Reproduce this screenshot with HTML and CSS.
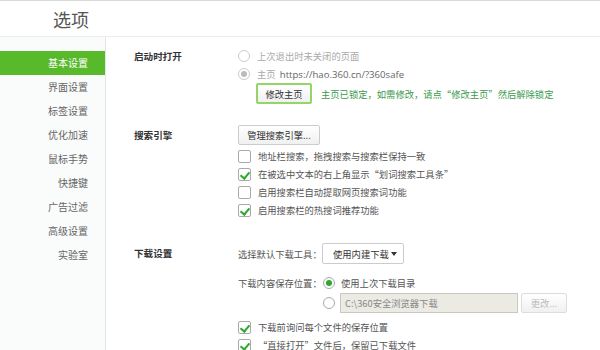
FILE: index.html
```html
<!DOCTYPE html>
<html lang="zh-CN">
<head>
<meta charset="utf-8">
<title>选项</title>
<link rel="stylesheet" href="styles.css">
</head>
<body>
<div class="window">
  <header class="header"><h1 class="title">选项</h1></header>
  <div class="body">
    <nav class="sidebar">
      <div class="nav-item active">基本设置</div>
      <div class="nav-item">界面设置</div>
      <div class="nav-item">标签设置</div>
      <div class="nav-item">优化加速</div>
      <div class="nav-item">鼠标手势</div>
      <div class="nav-item">快捷键</div>
      <div class="nav-item">广告过滤</div>
      <div class="nav-item">高级设置</div>
      <div class="nav-item">实验室</div>
    </nav>
    <main class="main">
      <section class="section s1">
        <div class="label">启动时打开</div>
        <div class="controls">
          <div class="row disabled"><span class="radio dis"></span><span>上次退出时未关闭的页面</span></div>
          <div class="row disabled"><span class="radio dis checked-gray"></span><span>主页&nbsp;&nbsp;<span class="latin">https://hao.360.cn/?360safe</span></span></div>
          <div class="row btnrow">
            <span class="btn btn-green">修改主页</span>
            <span class="green-text">主页已锁定，如需修改，请点“修改主页”然后解除锁定</span>
          </div>
        </div>
      </section>
      <section class="section s2">
        <div class="label">搜索引擎</div>
        <div class="controls">
          <div class="row btnrow2"><span class="btn btn-plain">管理搜索引擎...</span></div>
          <div class="checks">
            <div class="row"><span class="check"></span><span>地址栏搜索，拖拽搜索与搜索栏保持一致</span></div>
            <div class="row"><span class="check on"></span><span>在被选中文本的右上角显示“划词搜索工具条”</span></div>
            <div class="row"><span class="check"></span><span>启用搜索栏自动提取网页搜索词功能</span></div>
            <div class="row"><span class="check on"></span><span>启用搜索栏的热搜词推荐功能</span></div>
          </div>
        </div>
      </section>
      <section class="section s3">
        <div class="label">下载设置</div>
        <div class="controls">
          <div class="row selrow"><span class="flabel">选择默认下载工具：</span><span class="select">使用内建下载<span class="caret"></span></span></div>
          <div class="row pathrow"><span class="flabel">下载内容保存位置：</span><span class="radio on"></span><span>使用上次下载目录</span></div>
          <div class="row inputrow"><span class="radio"></span><span class="input">C:\360安全浏览器下载</span><span class="btn btn-dis">更改...</span></div>
          <div class="checks checks3">
            <div class="row"><span class="check on"></span><span>下载前询问每个文件的保存位置</span></div>
            <div class="row"><span class="check on"></span><span>“直接打开”文件后，保留已下载文件</span></div>
          </div>
        </div>
      </section>
    </main>
  </div>
</div>
</body>
</html>
```

FILE: styles.css
```css
* { box-sizing: border-box; }
html, body { margin: 0; padding: 0; }
body {
  width: 600px;
  height: 350px;
  overflow: hidden;
  background: #fff;
  font-family: "Noto Sans CJK SC", "Microsoft YaHei", "Noto Sans", sans-serif;
  font-size: 10px;
  color: #555;
}
.window { border-top: 1px solid #d9d9d9; height: 350px; }
.header {
  height: 36px;
  border-bottom: 1px solid #ececec;
  padding-left: 53px;
  display: flex;
  align-items: center;
}
.title {
  margin: 0;
  font-size: 18px;
  font-weight: normal;
  color: #555;
  line-height: 1;
}
.body { display: flex; height: 313px; }
.sidebar {
  width: 106px;
  flex: none;
  background: #fafbfb;
  border-right: 1px solid #e6e6e6;
  padding-top: 14px;
}
.nav-item {
  height: 24px;
  line-height: 24px;
  text-align: right;
  padding-right: 17px;
  color: #666;
}
.nav-item.active { background: #58b92b; color: #fff; }
.main { flex: 1; padding-top: 10px; padding-left: 28px; font-size: 9.3px; }
.section { display: flex; }
.label {
  width: 104px;
  flex: none;
  font-weight: bold;
  color: #333;
  line-height: 18px;
  font-size: 9.6px;
}
.s2 .label { line-height: 20px; }
.s3 .label { line-height: 21px; }
.s2 { margin-top: 21px; }
.s3 { margin-top: 24px; }
.controls { display: flex; flex-direction: column; }
.row {
  display: flex;
  align-items: center;
  height: 18px;
  gap: 7px;
  white-space: nowrap;
}
.disabled { color: #aaa; }
.latin { font-family: "Open Sans", "Noto Sans", sans-serif; color: #666; font-size: 9.6px; }
.radio {
  width: 12px; height: 12px;
  border: 1px solid #aaa;
  border-radius: 50%;
  background: #fff;
  flex: none;
  position: relative;
}
.radio.dis { border-color: #ccc; }
.radio.checked-gray::after, .radio.on::after {
  content: "";
  position: absolute;
  left: 2px; top: 2px;
  width: 6px; height: 6px;
  border-radius: 50%;
  background: #bbb;
}
.radio.on::after { background: #2ea82e; }
.btnrow { height: 21px; gap: 9px; }
.btn {
  display: inline-flex;
  align-items: center;
  justify-content: center;
  height: 20px;
  padding: 0 9px;
  border: 1px solid #ccc;
  border-radius: 2px;
  background: linear-gradient(#fff, #f0f0f0);
  color: #333;
}
.btn-green {
  height: 21px;
  margin-left: 18px;
  border: 2px solid #94d56a;
  width: 56px;
  padding: 0;
}
.green-text { color: #3a9a4c; }
.btnrow2 { height: 20px; }
.btn-plain { width: 82px; padding: 0; }
.checks { margin-top: 2px; display: flex; flex-direction: column; }
.check {
  width: 13px; height: 13px;
  border: 1px solid #aaa;
  border-radius: 2px;
  background: #fff;
  flex: none;
  position: relative;
}
.check.on::after {
  content: "";
  position: absolute;
  left: 3px; top: 1px;
  width: 4px; height: 7px;
  border: solid #2ea82e;
  border-width: 0 2px 2px 0;
  transform: rotate(40deg);
}
.flabel { width: 80px; flex: none; }
.selrow { height: 21px; gap: 4px; }
.select {
  display: inline-flex;
  align-items: center;
  justify-content: space-between;
  height: 21px;
  width: 82px;
  border: 1px solid #ccc;
  border-radius: 2px;
  background: #fff;
  color: #333;
  padding: 0 6px 0 10px;
}
.caret {
  width: 0; height: 0;
  border-left: 3.5px solid transparent;
  border-right: 3.5px solid transparent;
  border-top: 4px solid #333;
}
.pathrow { margin-top: 10px; gap: 6px; }
.pathrow .flabel { width: 79px; }
.inputrow { height: 20px; margin-top: 1px; padding-left: 85px; gap: 4px; }
.input {
  width: 178px;
  height: 20px;
  border: 1px solid #c8c8c0;
  background: #ebebe4;
  color: #888;
  padding-left: 4px;
  display: inline-flex;
  align-items: center;
}
.inputrow .radio { margin-right: 1px; }
.btn-dis { color: #bbb; border-color: #ddd; width: 46px; padding: 0; margin-left: -1px; }
.checks3 { margin-top: 5px; }
```
